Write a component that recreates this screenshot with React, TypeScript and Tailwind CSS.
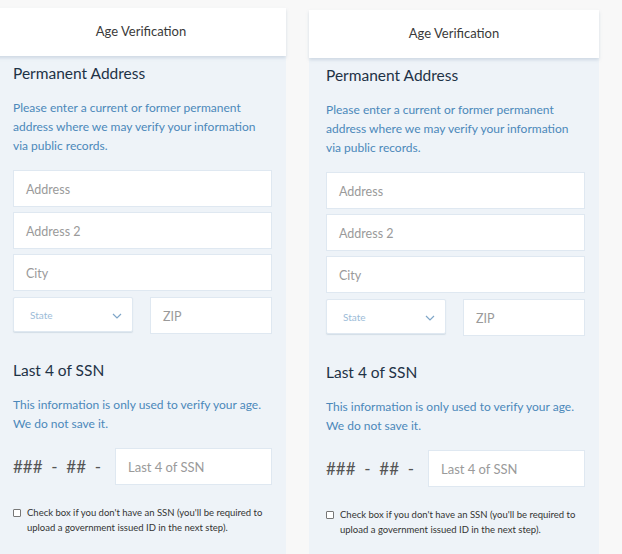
import React from "react";

const font = { fontFamily: "Lato, 'Open Sans', sans-serif" };

function Field({ placeholder }: { placeholder: string }) {
  return (
    <div className="h-[37px] bg-white border border-[#dfe8f1] flex items-center pl-[12px] pt-[3px] text-[12.5px] text-[#9a9a9a]">
      {placeholder}
    </div>
  );
}

function Panel() {
  return (
    <div className="w-[290px] shrink-0 bg-[#eef3f8] min-h-[560px]">
      <div className="h-12 bg-white flex items-center justify-center text-[13px] text-[#3a3a3a] shadow-[0_2px_3px_rgba(150,170,190,0.35)] relative">
        Age Verification
      </div>
      <div className="pl-[17px] pr-[14px] pt-[6px]">
        <div className="text-[15.5px] leading-[22px] text-[#1e3246]">Permanent Address</div>
        <p className="mt-[14px] text-[12px] leading-[19px] text-[#4b88ba]">
          Please enter a current or former permanent
          <br />
          address where we may verify your information
          <br />
          via public records.
        </p>
        <div className="mt-[15px] flex flex-col gap-[5px]">
          <Field placeholder="Address" />
          <Field placeholder="Address 2" />
          <Field placeholder="City" />
        </div>
        <div className="mt-[6px] flex items-start justify-between">
          <div className="w-[120px] h-[35px] bg-white border border-[#dfe8f1] rounded-[2px] shadow-[0_1px_1px_rgba(150,170,190,0.3)] flex items-center justify-between pl-[16px] pr-[10px] pt-[2px]">
            <span className="text-[10px] text-[#9cbcd8]">State</span>
            <svg width="10" height="6" viewBox="0 0 10 6" fill="none">
              <path d="M1 1 L5 5 L9 1" stroke="#7fa6c8" strokeWidth="1.2" />
            </svg>
          </div>
          <div className="w-[122px] h-[37px] bg-white border border-[#dfe8f1] flex items-center pl-[12px] pt-[3px] text-[12.5px] text-[#9a9a9a]">
            ZIP
          </div>
        </div>
        <div className="mt-[25px] text-[15.5px] leading-[22px] text-[#1e3246]">Last 4 of SSN</div>
        <p className="mt-[14px] text-[12px] leading-[19px] text-[#4b88ba]">
          This information is only used to verify your age.
          <br />
          We do not save it.
        </p>
        <div className="mt-[15px] flex items-center">
          <div className="w-[102px] text-[17px] text-[#555] whitespace-pre">{"###  -  ##  -"}</div>
          <div className="flex-1 h-[37px] bg-white border border-[#dfe8f1] flex items-center pl-[12px] pt-[2px] text-[13px] text-[#9a9a9a]">
            Last 4 of SSN
          </div>
        </div>
        <div className="mt-[20px] flex items-start gap-[6px]">
          <div className="mt-[4px] w-[8px] h-[8px] border border-[#777] rounded-[1px] bg-white shrink-0" />
          <p className="text-[9.5px] leading-[15px] text-[#333] whitespace-nowrap">
            Check box if you don't have an SSN (you'll be required to
            <br />
            upload a government issued ID in the next step).
          </p>
        </div>
      </div>
    </div>
  );
}

export default function App() {
  return (
    <div className="w-[622px] h-[554px] overflow-hidden bg-[#f8f8f8] flex items-start" style={font}>
      <div className="ml-[-4px] mt-2">
        <Panel />
      </div>
      <div className="ml-[23px] mt-[10px]">
        <Panel />
      </div>
    </div>
  );
}
